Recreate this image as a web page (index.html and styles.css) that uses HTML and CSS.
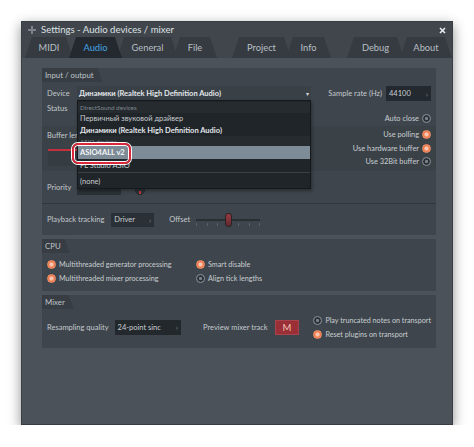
FILE: index.html
```html
<!DOCTYPE html>
<html lang="en">
<head>
<meta charset="utf-8">
<title>Settings - Audio devices / mixer</title>
<link rel="stylesheet" href="styles.css">
</head>
<body>
<div class="window">
  <div class="titlebar">
    <svg class="ticon" width="8" height="8" viewBox="0 0 8 8"><path d="M3 0h2v3h3v2H5v3H3V5H0V3h3z" fill="#7c838a"/></svg>
    <span class="title">Settings - Audio devices / mixer</span>
    <svg class="close" width="7" height="7" viewBox="0 0 7 7"><path d="M1 1L6 6M6 1L1 6" stroke="#e8ecef" stroke-width="1.6"/></svg>
  </div>
  <div class="tabs">
    <div class="tab t-midi">MIDI</div>
    <div class="tab t-audio active">Audio</div>
    <div class="tab t-general">General</div>
    <div class="tab t-file">File</div>
    <div class="tab t-project">Project</div>
    <div class="tab t-info">Info</div>
    <div class="tab t-debug">Debug</div>
    <div class="tab t-about">About</div>
  </div>
  <div class="content">
    <section class="panel io">
      <div class="phead">Input / output</div>
      <div class="row row-a">
        <span class="lbl lbl-dev">Device</span>
        <div class="select">
          <span class="sel-text">Динамики (Realtek High Definition Audio)</span>
          <span class="sel-arrow">▾</span>
          <div class="list">
            <div class="li hdr hdr-ds">DirectSound devices</div>
            <div class="li">Первичный звуковой драйвер</div>
            <div class="li cur">Динамики (Realtek High Definition Audio)</div>
            <div class="li hdr hdr-asio">ASIO devices</div>
            <div class="li sel">ASIO4ALL v2</div>
            <div class="li item-fl">FL Studio ASIO</div>
            <div class="li-sep"></div>
            <div class="li item-none">(none)</div>
            <div class="callout"></div>
          </div>
        </div>
        <div class="right-grp">
          <span class="lbl">Sample rate (Hz)</span>
          <div class="vbox vbox-rate"><span>44100</span><span class="chev">›</span></div>
        </div>
      </div>
      <div class="row row-b">
        <span class="lbl status">Status</span>
        <label class="opt opt-auto">Auto close <i class="radio"></i></label>
      </div>
      <div class="row row-c">
        <div class="buf">
          <span class="lbl buf-lbl">Buffer length</span>
          <div class="buf-slider"></div>
          <div class="buf-box"></div>
        </div>
        <div class="opts">
          <label class="opt">Use polling <i class="radio on"></i></label>
          <label class="opt">Use hardware buffer <i class="radio on"></i></label>
          <label class="opt">Use 32Bit buffer <i class="radio"></i></label>
        </div>
      </div>
      <div class="row row-d">
        <span class="lbl lbl-dev">Priority</span>
        <div class="prio-box"></div>
        <div class="knob"></div>
      </div>
      <div class="sep"></div>
      <div class="row row-e">
        <span class="lbl">Playback tracking</span>
        <div class="vbox vbox-driver"><span>Driver</span><span class="chev">›</span></div>
        <span class="lbl lbl-offset">Offset</span>
        <div class="slider">
          <div class="track"></div>
          <div class="ticks"><i></i><i></i><i></i><i></i><i></i><i></i><i></i></div>
          <div class="thumb"></div>
        </div>
      </div>
    </section>

    <section class="panel cpu">
      <div class="phead">CPU</div>
      <div class="cpu-grid">
        <label class="copt"><i class="radio on"></i>Multithreaded generator processing</label>
        <label class="copt"><i class="radio on"></i>Smart disable</label>
        <label class="copt"><i class="radio on"></i>Multithreaded mixer processing</label>
        <label class="copt"><i class="radio"></i>Align tick lengths</label>
      </div>
    </section>

    <section class="panel mixer">
      <div class="phead">Mixer</div>
      <div class="row row-m">
        <span class="lbl">Resampling quality</span>
        <div class="vbox vbox-res"><span>24-point sinc</span><span class="chev">›</span></div>
        <span class="lbl lbl-prev">Preview mixer track</span>
        <div class="mbtn">M</div>
        <div class="mopts">
          <label class="copt"><i class="radio"></i>Play truncated notes on transport</label>
          <label class="copt"><i class="radio on"></i>Reset plugins on transport</label>
        </div>
      </div>
    </section>
  </div>
</div>
</body>
</html>
```

FILE: styles.css
```css
* { box-sizing: border-box; }

body {
  margin: 0;
  background: #ffffff;
  font-family: Lato, "Open Sans", sans-serif;
  color: #c3c9ce;
}

.window {
  margin: 21px 0 0 21px;
  width: 432px;
  height: 404px;
  background: #4b5259;
  border: 1px solid #383e43;
  box-shadow: 0 4px 12px rgba(0, 0, 0, 0.45);
  display: flex;
  flex-direction: column;
}

.titlebar {
  height: 15px;
  background: #40464c;
  display: flex;
  align-items: center;
  padding: 0 6px 0 6px;
}
.ticon { margin-top: 1px; }
.title {
  margin-left: 5px;
  font-size: 9.6px;
  color: #dde1e4;
}
.close { margin-left: auto; margin-top: 1px; }

.tabs {
  height: 21px;
  background: #40464c;
  display: flex;
  align-items: flex-end;
}
.tab {
  position: relative;
  height: 21px;
  clip-path: polygon(7px 0, calc(100% - 7px) 0, 100% 100%, 0 100%);
  background: #353b41;
  color: #b8bfc4;
  font-size: 9.3px;
  display: flex;
  align-items: center;
  justify-content: center;
  padding-bottom: 1px;
}
.tab.active { background: #23292e; color: #45a4e6; z-index: 1; }
.t-midi { margin-left: 3px; width: 48px; }
.t-audio { margin-left: -4px; width: 53px; }
.t-general { margin-left: -5px; width: 61px; }
.t-file { margin-left: -5px; width: 44px; }
.t-project { margin-left: 15px; width: 59px; }
.t-info { margin-left: -5px; width: 45px; }
.t-debug { margin-left: 16px; width: 57px; }
.t-about { margin-left: -4px; width: 52px; }

.content {
  flex: 1;
  padding: 10px 16px 0 20px;
  display: flex;
  flex-direction: column;
  gap: 4px;
}

.panel { background: #3e454c; position: relative; }
.io { height: 167px; display: flex; flex-direction: column; }
.cpu { height: 52px; }
.mixer { height: 53px; }

.phead {
  height: 14px;
  width: fit-content;
  padding: 0 9px 0 3px;
  display: flex;
  align-items: center;
  font-size: 7.8px;
  color: #bfc5ca;
  background: #373d43;
  clip-path: polygon(0 0, calc(100% - 5px) 0, 100% 100%, 0 100%);
}

.lbl { font-size: 7.5px; color: #c3c9ce; white-space: nowrap; }

.row { display: flex; padding: 0 5px; }

.row-a { margin-top: 4px; height: 15px; align-items: center; }
.lbl-dev { width: 30px; }
.select {
  position: relative;
  width: 234px;
  height: 15px;
  background: #394046;
  display: flex;
  align-items: center;
  padding-left: 2px;
  z-index: 3;
}
.sel-text { font-size: 7.5px; font-weight: 700; color: #e4e8eb; white-space: nowrap; }
.sel-arrow { margin-left: auto; margin-right: 2px; font-size: 6px; color: #d6dadd; }

.right-grp { margin-left: auto; display: flex; align-items: center; gap: 4px; }
.vbox {
  height: 15px;
  background: #23292e;
  display: flex;
  align-items: center;
  justify-content: space-between;
  padding: 0 3px;
  font-size: 7.5px;
  color: #c9ced2;
}
.chev { color: #7b838a; font-size: 8px; }
.vbox-rate { width: 45px; }

.list {
  position: absolute;
  left: 0;
  top: 14px;
  width: 234px;
  height: 89px;
  background: #202529;
  border: 1px solid #15191c;
  padding-top: 1px;
  display: flex;
  flex-direction: column;
  box-shadow: 1px 2px 3px rgba(0, 0, 0, 0.35);
}
.li {
  height: 13px;
  display: flex;
  align-items: center;
  padding-left: 2px;
  font-size: 7.5px;
  color: #c7ccd0;
  white-space: nowrap;
}
.li.hdr { font-size: 6.3px; color: #7f878e; background: #262b30; }
.hdr-ds { height: 11px; }
.hdr-asio { height: 10px; }
.li:nth-child(2) { height: 12px; }
.li.cur { height: 12px; font-weight: 700; color: #e2e6e9; }
.li.sel { background: #7d8c97; color: #f4f6f7; font-weight: 700; }
.li-sep { height: 2px; border-top: 1px solid #3b4147; margin-top: 1px; }
.item-none { height: 14px; }

.callout {
  position: absolute;
  left: -6px;
  top: 42px;
  width: 59px;
  height: 21px;
  border: 2.5px solid #d9283a;
  border-radius: 6px;
  box-shadow: 0 0 0 1px #ffffff, inset 0 0 0 1px #ffffff;
}

.row-b { height: 25px; justify-content: space-between; }
.status { padding-top: 2px; line-height: 12px; }
.opt-auto { align-self: flex-end; margin-bottom: 3px; }

.opt {
  display: flex;
  align-items: center;
  justify-content: flex-end;
  gap: 3px;
  font-size: 7.4px;
  color: #c8ced2;
  white-space: nowrap;
}

.radio {
  display: inline-block;
  width: 9px;
  height: 9px;
  border-radius: 50%;
  border: 1px solid #8c9399;
  background: radial-gradient(circle, #7b8288 0 1.3px, #2b3136 1.8px);
  flex: none;
}
.radio.on {
  border-color: #f3956a;
  background: radial-gradient(circle, #f8c6b0 0 1.6px, #f07a4e 2.6px, #ea6a3f 4px);
}

.row-c {
  height: 45px;
  background: #3a4147;
  justify-content: space-between;
}
.buf { display: flex; flex-direction: column; padding-top: 3px; }
.buf-lbl { line-height: 13px; width: 30px; overflow: hidden; }
.buf-slider { margin-top: 7px; width: 150px; height: 2px; background: #c4303b; margin-left: 1px; }
.buf-box { width: 29px; height: 15px; background: #353c42; margin-left: 1px; }
.opts { display: flex; flex-direction: column; padding-top: 2px; }
.opts .opt { height: 13.5px; }

.row-d { height: 32px; align-items: center; padding-top: 1px; }
.prio-box { width: 44px; height: 14px; background: #2a3035; }
.knob {
  width: 10px;
  height: 10px;
  border-radius: 50%;
  background: #30363b;
  border: 1px solid #23282c;
  margin-left: 14px;
  margin-top: 4px;
  position: relative;
}
.knob::after {
  content: "";
  position: absolute;
  left: 3px;
  bottom: 0;
  width: 2px;
  height: 3px;
  background: #c7313c;
}

.sep { height: 1px; background: #31373d; }

.row-e { height: 31px; align-items: center; }
.vbox-driver { width: 43px; height: 14px; margin-left: 7px; background: #2a3035; }
.lbl-offset { margin-left: 15px; }
.slider { position: relative; width: 64px; height: 14px; margin-left: 6px; }
.track { position: absolute; left: 0; right: 0; top: 6px; height: 2px; background: #2a2f34; }
.ticks {
  position: absolute;
  left: 0;
  right: 0;
  top: 10px;
  display: flex;
  justify-content: space-between;
}
.ticks i { display: block; width: 1px; height: 3px; background: #5b636a; }
.thumb {
  position: absolute;
  left: 29px;
  top: 0;
  width: 7px;
  height: 14px;
  border-radius: 3px;
  background: linear-gradient(#9a3a41, #5d2a2f);
  border: 1px solid #2a2326;
}

.cpu-grid {
  margin-top: 4px;
  padding-left: 5px;
  display: grid;
  grid-template-columns: 149px auto;
  grid-auto-rows: 14px;
}
.copt {
  display: flex;
  align-items: center;
  gap: 3px;
  font-size: 7.2px;
  color: #c8ced2;
  white-space: nowrap;
}

.row-m { margin-top: 3px; height: 30px; align-items: center; }
.vbox-res { width: 70px; margin-left: 6px; background: #23282d; }
.lbl-prev { margin-left: 22px; }
.mbtn {
  margin-left: 7px;
  width: 26px;
  height: 15px;
  background: #9a2f37;
  border: 1px solid #a8434c;
  color: #f0c2b2;
  font-size: 9.5px;
  display: flex;
  align-items: center;
  justify-content: center;
}
.mopts { margin-left: 14px; display: flex; flex-direction: column; }
.mopts .copt { height: 14px; }
```
